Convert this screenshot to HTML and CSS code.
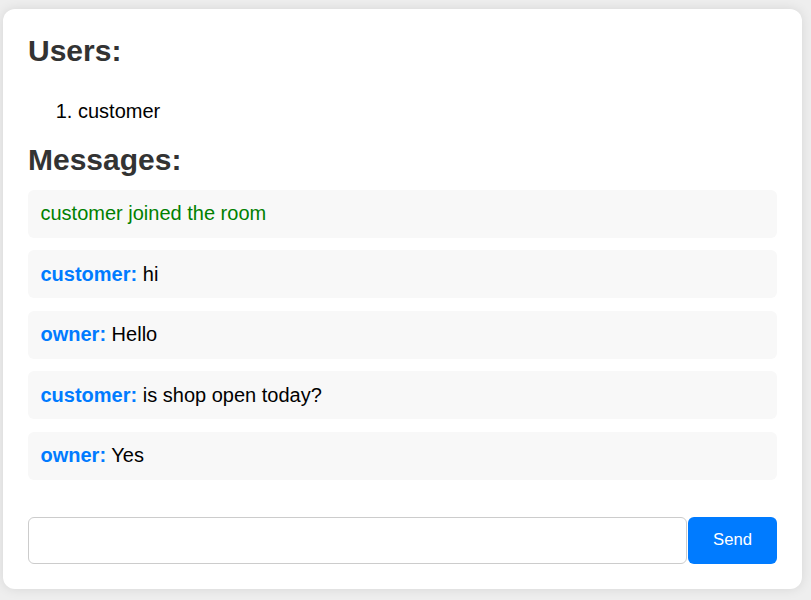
FILE: index.html
```html
<!DOCTYPE html>
<html lang="en">
<head>
<meta charset="utf-8">
<title>Chat Room</title>
<link rel="stylesheet" href="styles.css">
</head>
<body>
  <div class="container">
    <h2 class="title">Users:</h2>
    <ol class="users">
      <li>customer</li>
    </ol>
    <h2 class="title title-messages">Messages:</h2>
    <div class="messages">
      <div class="message system">customer joined the room</div>
      <div class="message"><span class="name">customer:</span> hi</div>
      <div class="message"><span class="name">owner:</span> Hello</div>
      <div class="message"><span class="name">customer:</span> is shop open today?</div>
      <div class="message"><span class="name">owner:</span> Yes</div>
    </div>
    <form class="send-form" onsubmit="return false;">
      <input class="send-input" type="text">
      <button class="send-button" type="submit">Send</button>
    </form>
  </div>
</body>
</html>
```

FILE: styles.css
```css
html, body {
  margin: 0;
  padding: 0;
}

body {
  background: #eeeeee;
  font-family: "Liberation Sans", Arial, sans-serif;
  font-size: 20px;
  color: #000;
}

.container {
  margin: 9px 9px 11px 3px;
  background: #fff;
  border-radius: 12px;
  box-shadow: 0 0 12px rgba(0, 0, 0, 0.1);
  padding: 25px;
  height: 530px;
}

.title {
  margin: 0 0 12.5px;
  font-size: 30px;
  font-weight: bold;
  color: #333;
  line-height: 34.5px;
}

.users {
  margin: 31px 0 20px;
  padding-left: 50px;
}

.users li {
  line-height: 23px;
}

.messages {
  display: flex;
  flex-direction: column;
  gap: 12.5px;
  margin-bottom: 37px;
}

.message {
  background: #f8f8f8;
  border-radius: 6px;
  padding: 12.5px;
  line-height: 23px;
}

.message.system {
  color: green;
}

.name {
  color: #007bff;
  font-weight: bold;
}

.send-form {
  display: flex;
  margin: 0;
}

.send-input {
  flex: 1;
  min-width: 0;
  margin: 0;
  padding: 12.5px;
  font-family: "Liberation Sans", Arial, sans-serif;
  font-size: 16.67px;
  border: 1px solid #ccc;
  border-radius: 6px;
  height: 47px;
  box-sizing: border-box;
}

.send-button {
  margin: 0 0 0 1px;
  padding: 0 25px;
  font-family: "Liberation Sans", Arial, sans-serif;
  font-size: 16.67px;
  color: #fff;
  background: #007bff;
  border: none;
  border-radius: 6px;
  height: 47px;
  cursor: pointer;
}
```
